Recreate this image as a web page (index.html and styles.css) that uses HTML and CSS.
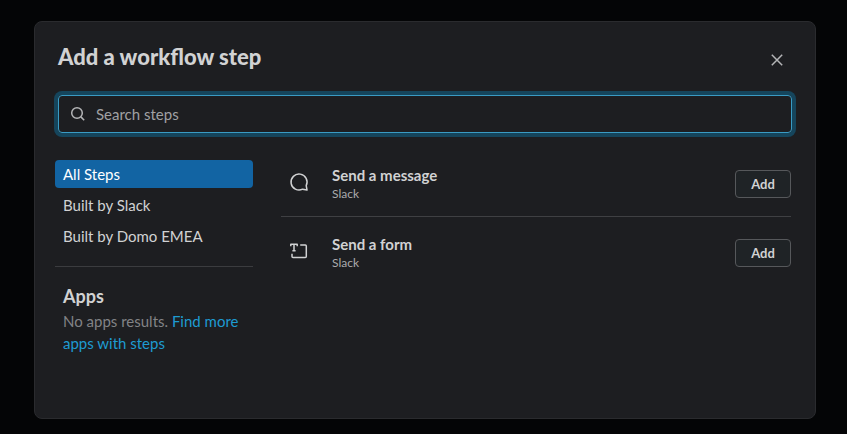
FILE: index.html
```html
<!DOCTYPE html>
<html lang="en">
<head>
    <meta charset="UTF-8">
    <meta name="viewport" content="width=device-width, initial-scale=1">
    <title>Add a workflow step</title>
    <link rel="stylesheet" href="styles.css">
</head>
<body>
    <div class="modal" role="dialog" aria-labelledby="modalTitle">
        <header class="modal-header">
            <h1 id="modalTitle">Add a workflow step</h1>
            <button class="close-btn" type="button" aria-label="Close">
                <svg width="20" height="20" viewBox="0 0 20 20">
                    <path d="M4.8 4.8l10.4 10.4M15.2 4.8L4.8 15.2"/>
                </svg>
            </button>
        </header>

        <div class="search-box">
            <svg width="16" height="16" viewBox="0 0 16 16">
                <circle cx="7" cy="7" r="5.3"/>
                <path d="M10.9 10.9l3.3 3.3"/>
            </svg>
            <input type="text" placeholder="Search steps" aria-label="Search steps">
        </div>

        <div class="modal-body">
            <aside class="sidebar">
                <nav class="filters">
                    <button class="filter active" type="button">All Steps</button>
                    <button class="filter" type="button">Built by Slack</button>
                    <button class="filter" type="button">Built by Domo EMEA</button>
                </nav>
                <section class="apps">
                    <h2>Apps</h2>
                    <p>No apps results. <a href="#">Find more apps with steps</a></p>
                </section>
            </aside>

            <ul class="step-list">
                <li class="step">
                    <svg class="step-icon" width="20" height="20" viewBox="0 0 20 20">
                        <path d="M18 18L17.2 13.6A8 8 0 1 0 13.6 17.2Z"/>
                    </svg>
                    <div class="step-text">
                        <h3>Send a message</h3>
                        <p>Slack</p>
                    </div>
                    <button class="add-btn" type="button">Add</button>
                </li>
                <li class="step">
                    <svg class="step-icon" width="20" height="20" viewBox="0 0 20 20">
                        <path d="M1.8 5.2V3.2h6.4v2M5 3.2v6.6M3.4 9.8h3.2M11.2 4h5.1a1 1 0 0 1 1 1v10.4a1 1 0 0 1-1 1H4a1 1 0 0 1-1-1v-2.6"/>
                    </svg>
                    <div class="step-text">
                        <h3>Send a form</h3>
                        <p>Slack</p>
                    </div>
                    <button class="add-btn" type="button">Add</button>
                </li>
            </ul>
        </div>
    </div>
</body>
</html>
```
FILE: styles.css
```css
* {
    box-sizing: border-box;
}

body {
    font-family: Lato, sans-serif;
    font-size: 15px;
    line-height: 22px;
    margin: 0;
    min-height: 100vh;
    padding: 21px 31px 15px 34px;
    display: flex;
    background-color: #040506;
    color: #d1d2d3;
}

h1, h2, h3, p, ul {
    margin: 0;
    padding: 0;
}

button, input {
    font: inherit;
    color: inherit;
}

button {
    cursor: pointer;
}

svg {
    flex-shrink: 0;
    fill: none;
    stroke: #d1d2d3;
    stroke-width: 1.5;
    stroke-linejoin: round;
}

.modal {
    flex: 1;
    padding: 20px 23px;
    background-color: #1d1e21;
    border: 1px solid #2a2b2e;
    border-radius: 8px;
}

/* Header */
.modal-header {
    display: flex;
    justify-content: space-between;
    align-items: flex-start;
    height: 53px;
    padding-right: 1px;
}

.modal-header h1 {
    font-size: 22px;
    line-height: 30px;
    font-weight: 900;
}

.close-btn {
    display: flex;
    margin-top: 4px;
    padding: 4px;
    border: none;
    background: transparent;
}

.close-btn svg {
    stroke: #b4b5b7;
}

/* Search */
.search-box {
    display: flex;
    align-items: center;
    gap: 10px;
    height: 38px;
    padding: 0 11px;
    border: 1px solid #3a9bc4;
    border-radius: 4px;
    box-shadow: 0 0 0 4px #15455c;
}

.search-box svg {
    stroke: #b4b5b7;
}

.search-box input {
    flex: 1;
    padding: 0;
    border: none;
    outline: none;
    background: transparent;
}

.search-box input::placeholder {
    color: #a0a1a4;
    opacity: 1;
}

/* Two columns */
.modal-body {
    display: flex;
    gap: 28px;
    padding: 27px 1px 0 0;
    margin-left: -3px;
}

.sidebar {
    width: 198px;
}

.filters {
    display: flex;
    flex-direction: column;
    gap: 3px;
    padding-bottom: 16px;
    border-bottom: 1px solid #3b3c3f;
}

.filter {
    height: 28px;
    padding: 0 8px;
    border: none;
    border-radius: 4px;
    background: transparent;
    text-align: left;
}

.filter.active {
    background-color: #1264a3;
    color: #fff;
}

.apps {
    padding: 17px 8px 0;
}

.apps h2 {
    font-size: 18px;
    line-height: 24px;
    margin-bottom: 2px;
}

.apps p {
    color: #828386;
}

.apps a {
    color: #1d9bd1;
    text-decoration: none;
}

/* Steps */
.step-list {
    flex: 1;
    list-style-type: none;
}

.step {
    display: flex;
    align-items: center;
    height: 69px;
    padding-left: 8px;
    border-bottom: 1px solid #3f4043;
}

.step:first-child {
    height: 57px;
    padding-bottom: 8px;
}

.step:last-child {
    padding-top: 2px;
    border-bottom: none;
}

.step-icon {
    margin-bottom: 4px;
}

.step-text {
    flex: 1;
    margin-left: 23px;
    padding-bottom: 2px;
}

.step-text h3 {
    font-size: 15px;
    line-height: 22px;
}

.step-text p {
    font-size: 12px;
    line-height: 16px;
    color: #ababad;
}

.add-btn {
    width: 56px;
    height: 28px;
    padding: 0;
    border: 1px solid #56585b;
    border-radius: 4px;
    background-color: #1f2326;
    font-size: 13px;
    font-weight: 700;
}
```
